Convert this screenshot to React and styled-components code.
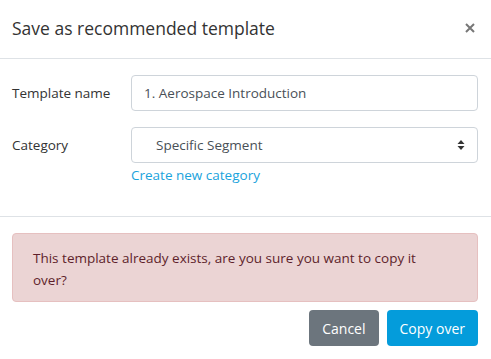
import React from 'react';
import styled, { createGlobalStyle } from 'styled-components';

const GlobalStyle = createGlobalStyle`
  html, body {
    margin: 0;
    padding: 0;
    background: #ffffff;
  }
  body {
    font-family: 'Open Sans', 'Noto Sans', sans-serif;
    font-size: 13.5px;
    color: #333;
  }
`;

const Modal = styled.div`
  width: 491px;
  height: 359px;
  background: #fff;
  display: flex;
  flex-direction: column;
`;

const Header = styled.div`
  height: 59px;
  box-sizing: border-box;
  padding: 0 14px 2px 12px;
  display: flex;
  align-items: center;
  justify-content: space-between;
  border-bottom: 1px solid #dee2e6;
`;

const Title = styled.h5`
  margin: 0;
  font-size: 17.5px;
  font-weight: 500;
  color: #333;
`;

const Close = styled.button`
  border: 0;
  background: none;
  padding: 0;
  width: 14px;
  height: 14px;
  display: flex;
  align-items: center;
  justify-content: center;
  cursor: pointer;
`;

const Body = styled.div`
  padding: 16px 13px 0 12px;
  height: 157px;
  box-sizing: border-box;
  display: flex;
  flex-direction: column;
  gap: 16px;
`;

const Row = styled.div`
  display: flex;
  align-items: flex-start;
`;

const Label = styled.label`
  width: 119px;
  flex: none;
  line-height: 36px;
  color: #333;
`;

const Field = styled.div`
  flex: 1;
  display: flex;
  flex-direction: column;
`;

const Input = styled.div`
  height: 36px;
  box-sizing: border-box;
  border: 1px solid #ced4da;
  border-radius: 4px;
  padding: 0 12px;
  display: flex;
  align-items: center;
  justify-content: space-between;
  color: #495057;
  padding-left: ${p => (p.$indent ? '24px' : '12px')};
`;

const Link = styled.a`
  color: #1aa3dc;
  text-decoration: none;
  margin-top: 2px;
  line-height: 20px;
  cursor: pointer;
`;

const Footer = styled.div`
  border-top: 1px solid #dee2e6;
  padding: 16px 13px 0 12px;
  display: flex;
  flex-direction: column;
  gap: 8px;
`;

const Alert = styled.div`
  height: 69px;
  box-sizing: border-box;
  background: #ebd4d4;
  border: 1px solid #e6c0c0;
  border-radius: 4px;
  padding: 13px 40px 0 20px;
  color: #5e1f2b;
  line-height: 22px;
`;

const Actions = styled.div`
  display: flex;
  justify-content: flex-end;
  gap: 8px;
`;

const Button = styled.button`
  height: 36px;
  border: 0;
  border-radius: 4px;
  padding: 0 13px;
  font-family: inherit;
  font-size: 14px;
  color: #fff;
  background: ${p => (p.$primary ? '#049cdb' : '#6c757d')};
  cursor: pointer;
`;

const SortIcon = () => (
  <svg width="8" height="12" viewBox="0 0 8 12">
    <path d="M4 1 L7.5 5 H0.5 Z M4 11 L7.5 7 H0.5 Z" fill="#333" />
  </svg>
);

export default function App() {
  return (
    <>
      <GlobalStyle />
      <Modal>
        <Header>
          <Title>Save as recommended template</Title>
          <Close aria-label="Close">
            <svg width="10" height="10" viewBox="0 0 10 10">
              <path d="M1 1 L9 9 M9 1 L1 9" stroke="#777" strokeWidth="2" />
            </svg>
          </Close>
        </Header>
        <Body>
          <Row>
            <Label>Template name</Label>
            <Field>
              <Input>1. Aerospace Introduction</Input>
            </Field>
          </Row>
          <Row>
            <Label>Category</Label>
            <Field>
              <Input $indent>
                Specific Segment
                <SortIcon />
              </Input>
              <Link>Create new category</Link>
            </Field>
          </Row>
        </Body>
        <Footer>
          <Alert>This template already exists, are you sure you want to copy it over?</Alert>
          <Actions>
            <Button>Cancel</Button>
            <Button $primary>Copy over</Button>
          </Actions>
        </Footer>
      </Modal>
    </>
  );
}
